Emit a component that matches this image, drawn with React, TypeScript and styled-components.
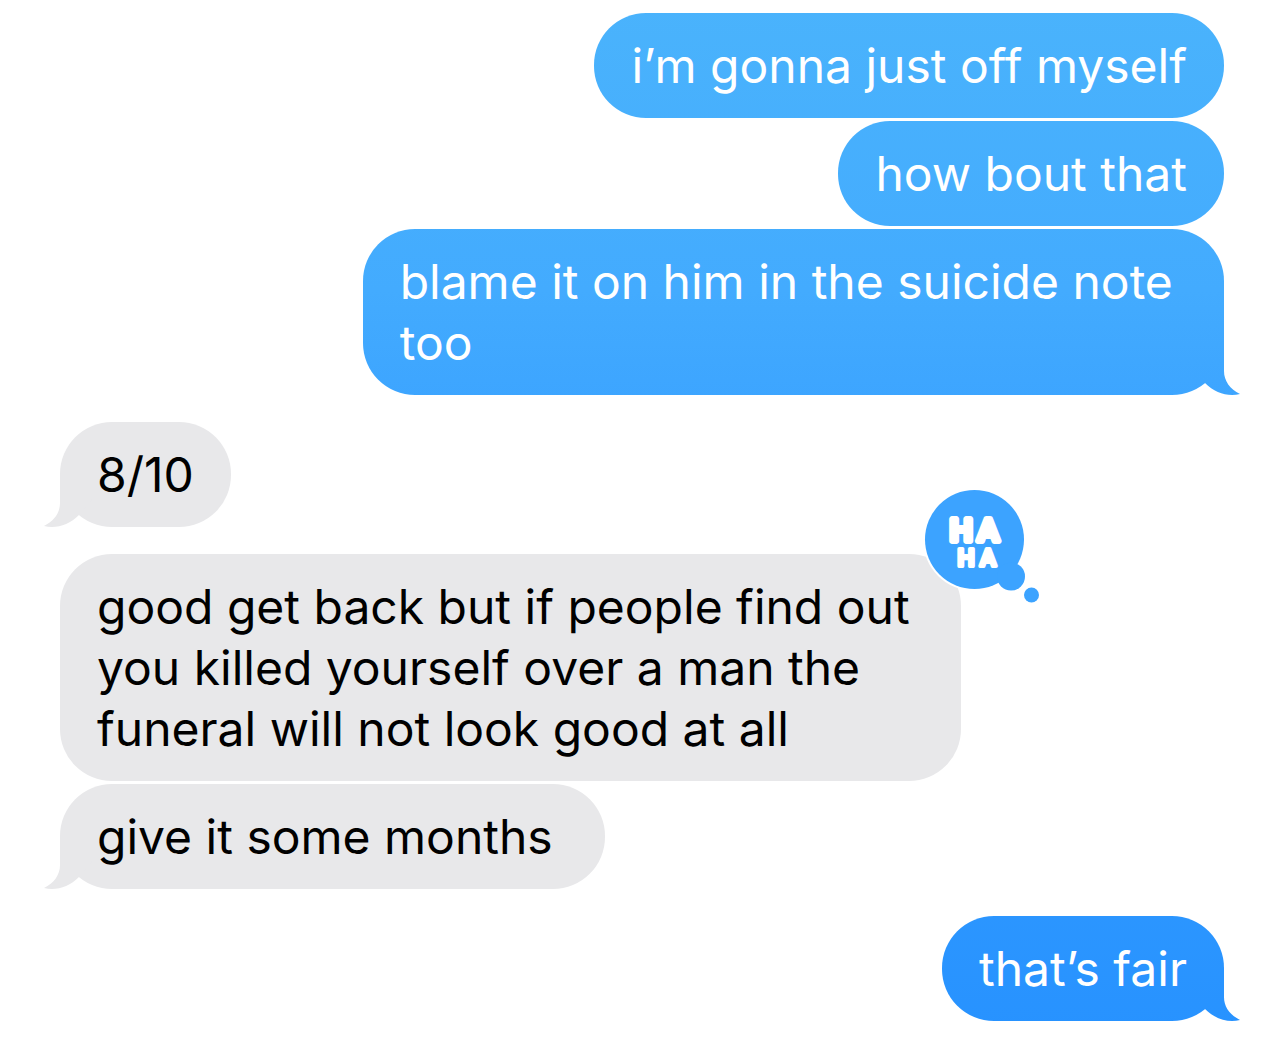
import React from 'react';
import styled, { createGlobalStyle, css } from 'styled-components';

type Side = 'sent' | 'received';

interface Message {
  text: string;
  tail?: boolean;
  laugh?: boolean;
  roomy?: boolean;
}

interface Group {
  side: Side;
  messages: Message[];
}

const groups: Group[] = [
  {
    side: 'sent',
    messages: [
      { text: 'i’m gonna just off myself' },
      { text: 'how bout that' },
      { text: 'blame it on him in the suicide note too', tail: true },
    ],
  },
  { side: 'received', messages: [{ text: '8/10', tail: true }] },
  {
    side: 'received',
    messages: [
      {
        text: 'good get back but if people find out you killed yourself over a man the funeral will not look good at all',
        laugh: true,
      },
      { text: 'give it some months', tail: true, roomy: true },
    ],
  },
  { side: 'sent', messages: [{ text: 'that’s fair', tail: true }] },
];

const GlobalStyle = createGlobalStyle`
  body {
    margin: 0;
    background: #ffffff;
  }
`;

const Conversation = styled.main`
  box-sizing: border-box;
  display: flex;
  flex-direction: column;
  gap: 27px;
  padding: 13px 59px 17px 60px;
  font-family: Inter, 'Liberation Sans', sans-serif;
  font-size: 48px;
  line-height: 61px;
`;

const MessageGroup = styled.ul<{ $side: Side }>`
  list-style: none;
  margin: 0;
  padding: 0;
  display: flex;
  flex-direction: column;
  align-items: ${({ $side }) => ($side === 'sent' ? 'flex-end' : 'flex-start')};
  gap: 3px;
`;

const sentFill = css`
  background: linear-gradient(#4ab3fc, #43abfe 28%, #3ca4ff 40%, #2792ff) fixed;
`;

const receivedFill = css`
  background: #e8e8ea;
`;

const sentTail = css`
  right: -16px;
  clip-path: path('M52 0V28C52 38 58 46 68 51C56 54 43 50 33 40L0 0Z');
`;

const receivedTail = css`
  left: -16px;
  clip-path: path('M16 0V28C16 38 10 46 0 51C12 54 25 50 35 40L68 0Z');
`;

const Bubble = styled.li<{ $side: Side; $tail?: boolean; $roomy?: boolean }>`
  position: relative;
  box-sizing: border-box;
  max-width: ${({ $side }) => ($side === 'sent' ? '74%' : '77.4%')};
  padding: 22px ${({ $roomy }) => ($roomy ? 52 : 37)}px 22px 37px;
  border-radius: 52px;
  color: ${({ $side }) => ($side === 'sent' ? '#ffffff' : '#000000')};
  ${({ $side }) => ($side === 'sent' ? sentFill : receivedFill)}

  ${({ $tail, $side }) =>
    $tail &&
    css`
      &::before {
        content: '';
        position: absolute;
        bottom: 0;
        width: 68px;
        height: 52px;
        ${$side === 'sent' ? sentFill : receivedFill}
        ${$side === 'sent' ? sentTail : receivedTail}
      }
    `}
`;

const MessageText = styled.p`
  position: relative;
  margin: 0;
`;

const Reaction = styled.svg`
  position: absolute;
  top: -66px;
  right: -80px;
  width: 118px;
  height: 118px;
`;

const Lettering = styled.text`
  font-family: Roboto, 'Liberation Sans', sans-serif;
  font-weight: 500;
  fill: #ffffff;
  stroke: #ffffff;
  stroke-linejoin: round;
  text-anchor: middle;
`;

function LaughReaction() {
  return (
    <Reaction viewBox="0 0 118 118" role="img" aria-label="Ha ha">
      <circle cx="51.5" cy="51.5" r="51.5" fill="#ffffff" />
      <g fill="#3ca3ff">
        <circle cx="51.5" cy="51.5" r="49.5" />
        <circle cx="88" cy="88.5" r="14" />
        <circle cx="108.5" cy="107" r="7.5" />
      </g>
      <Lettering>
        <tspan x="38 65" y="53" fontSize="32" strokeWidth="6">
          HA
        </tspan>
        <tspan x="43 65" y="78" fontSize="24" strokeWidth="4">
          HA
        </tspan>
      </Lettering>
    </Reaction>
  );
}

export default function App() {
  return (
    <>
      <GlobalStyle />
      <Conversation>
        {groups.map((group, groupIndex) => (
          <MessageGroup key={groupIndex} $side={group.side}>
            {group.messages.map((message) => (
              <Bubble
                key={message.text}
                $side={group.side}
                $tail={message.tail}
                $roomy={message.roomy}
              >
                <MessageText>{message.text}</MessageText>
                {message.laugh && <LaughReaction />}
              </Bubble>
            ))}
          </MessageGroup>
        ))}
      </Conversation>
    </>
  );
}
